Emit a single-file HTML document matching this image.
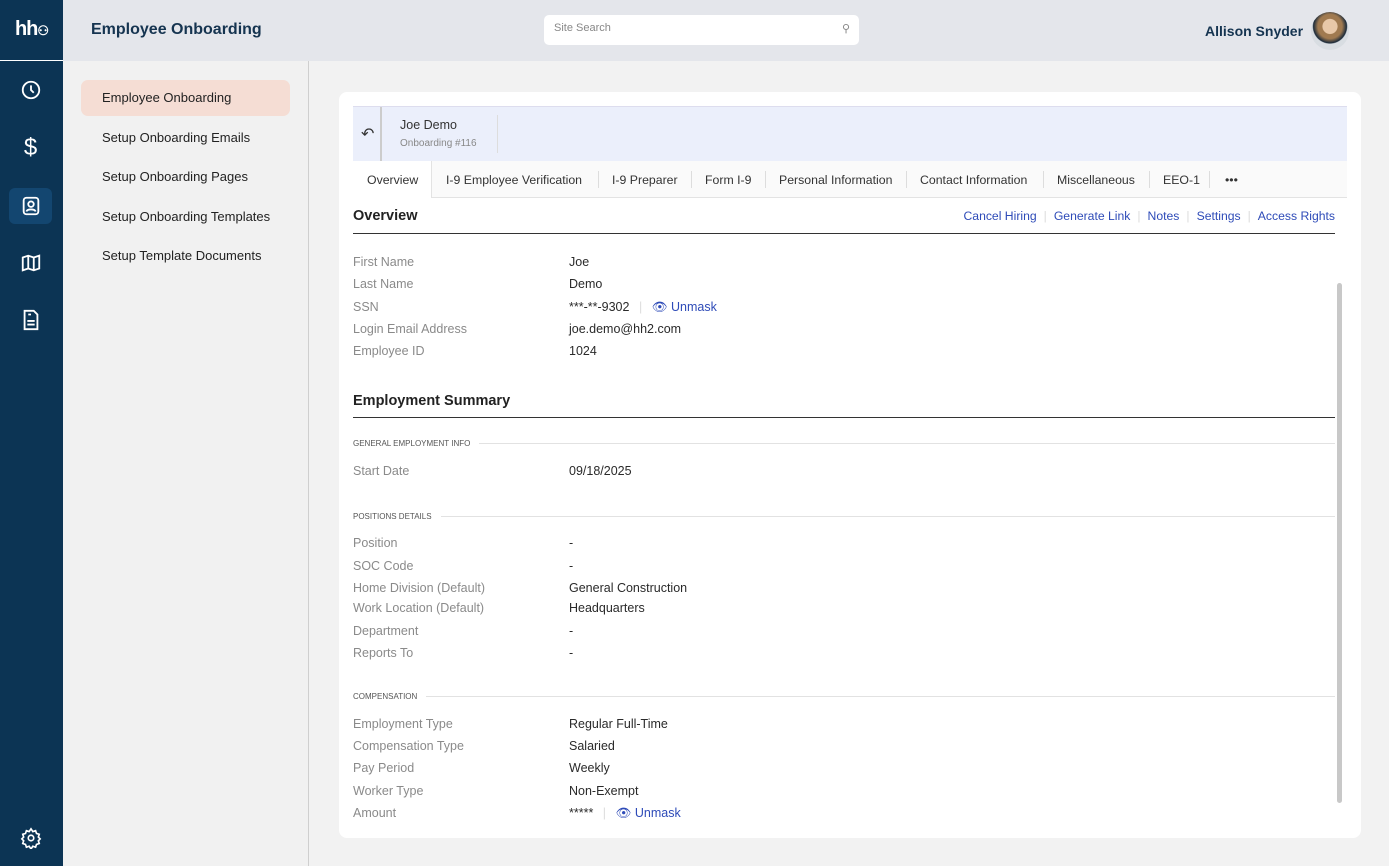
<!DOCTYPE html>
<html><head><style>
*{box-sizing:border-box;margin:0;padding:0}
body{width:1389px;height:866px;overflow:hidden;font-family:"Liberation Sans",sans-serif;background:#f2f2f2;position:relative;color:#333}
.side{position:absolute;left:0;top:0;width:63px;height:866px;background:#0c3454}
.logo{position:absolute;left:0;top:0;width:63px;height:61px;border-bottom:1px solid #fff;color:#fff;font-weight:bold;font-size:20px;text-align:center;line-height:58px;letter-spacing:-1px}
.ic{position:absolute;left:9px;width:43px;height:36px;border-radius:6px;display:flex;align-items:center;justify-content:center}
.top{position:absolute;left:63px;top:0;width:1326px;height:61px;background:#e4e6eb}
.title{position:absolute;left:28px;top:21px;font-size:16px;font-weight:bold;color:#153450}
.search{position:absolute;left:481px;top:15px;width:315px;height:30px;background:#fff;border-radius:5px;font-size:11px;color:#888;padding:7px 10px}
.user{position:absolute;left:1142px;top:23px;font-size:14px;font-weight:bold;color:#153450}
.av{position:absolute;left:1248px;top:12px;width:38px;height:38px;border-radius:50%;background:radial-gradient(circle at 50% 38%,#e8c8a8 0 24%,#a07a50 26% 40%,#1a2a3a 55%,#d8dde2 58%)}
.nav{position:absolute;left:63px;top:61px;width:246px;height:805px;background:#f1f1f1;border-right:1px solid #cfcfcf}
.nav div{position:absolute;left:39px;font-size:13px;color:#222}
.nav .act{left:18px;top:19px;width:209px;height:36px;background:#f5ddd4;border-radius:7px;padding:10px 21px}
.card{position:absolute;left:339px;top:92px;width:1022px;height:746px;background:#fff;border-radius:8px}
.strip{position:absolute;left:14px;top:14px;width:994px;height:55px;background:#ebeffb;border-top:1px solid #dde}
.tabs{position:absolute;left:14px;top:69px;width:994px;height:37px;background:#fafafa;border-bottom:1px solid #e3e3e3;font-size:12.3px;color:#333}
.tabs span{position:absolute;top:12px}
.tabs i{position:absolute;top:10px;width:1px;height:17px;background:#ddd}
.lbl{position:absolute;left:14px;font-size:12.5px;color:#8a8a8a}
.val{position:absolute;left:230px;font-size:12.5px;color:#2a2a2a}
.h{position:absolute;left:14px;font-size:14.5px;font-weight:bold;color:#222}
.hr{position:absolute;left:14px;width:982px;height:1px;background:#333}
.sec{position:absolute;left:14px;font-size:8px;color:#555;width:982px;display:flex;align-items:center}
.sec:after{content:"";flex:1;height:1px;background:#e2e2e2;margin-left:9px}
.lnk{color:#2e4bb8}
.links{position:absolute;right:26px;top:117px;font-size:12.2px;color:#2e4bb8}
.links b{font-weight:normal;color:#ddd;margin:0 7px}
</style></head><body>
<div class="side">
<div class="logo">hh<span style="font-size:13px">⚇</span></div>
<div class="ic" style="top:72px"><svg width="22" height="22" viewBox="0 0 24 24" fill="none" stroke="#fff" stroke-width="2"><circle cx="12" cy="12" r="9"/><path d="M12 7v5l3 3"/></svg></div>
<div class="ic" style="top:130px;color:#fff;font-size:24px">$</div>
<div class="ic" style="top:188px;background:#134670"><svg width="22" height="22" viewBox="0 0 24 24" fill="none" stroke="#fff" stroke-width="2"><rect x="4" y="3" width="16" height="18" rx="3"/><circle cx="12" cy="10" r="3"/><path d="M7 18c1-3 9-3 10 0"/></svg></div>
<div class="ic" style="top:245px"><svg width="22" height="22" viewBox="0 0 24 24" fill="none" stroke="#fff" stroke-width="2"><path d="M3 6l6-2 6 2 6-2v14l-6 2-6-2-6 2z M9 4v14 M15 6v14"/></svg></div>
<div class="ic" style="top:302px"><svg width="20" height="22" viewBox="0 0 20 24" fill="none" stroke="#fff" stroke-width="2"><path d="M3 2h10l4 4v16H3z M6 13h8 M6 17h8 M7 6h3"/></svg></div>
<div class="ic" style="top:820px"><svg width="22" height="22" viewBox="0 0 24 24" fill="none" stroke="#fff" stroke-width="1.8"><circle cx="12" cy="12" r="3"/><path d="M12 2l2 3 3-1 1 3 3 1-1 3 2 2-2 2 1 3-3 1-1 3-3-1-2 3-2-3-3 1-1-3-3-1 1-3-2-2 2-2-1-3 3-1 1-3 3 1z"/></svg></div>
</div>
<div class="top">
<div class="title">Employee Onboarding</div>
<div class="search">Site Search<span style="position:absolute;right:9px;top:7px">⚲</span></div>
<div class="user">Allison Snyder</div>
<div class="av"></div>
</div>
<div class="nav">
<div class="act">Employee Onboarding</div>
<div style="top:69px">Setup Onboarding Emails</div>
<div style="top:108px">Setup Onboarding Pages</div>
<div style="top:148px">Setup Onboarding Templates</div>
<div style="top:187px">Setup Template Documents</div>
</div>
<div class="card">
<div class="strip">
<div style="position:absolute;left:8px;top:17px;font-size:16px;color:#333">↶</div>
<div style="position:absolute;left:27px;top:0;width:2px;height:54px;background:#ccc"></div>
<div style="position:absolute;left:47px;top:11px;font-size:12.5px;color:#333">Joe Demo</div>
<div style="position:absolute;left:47px;top:31px;font-size:10px;color:#888">Onboarding #116</div>
<div style="position:absolute;left:144px;top:8px;width:1px;height:38px;background:#ddd"></div>
</div>
<div class="tabs">
<div style="position:absolute;left:0;top:0;width:79px;height:37px;background:#fff;border-right:1px solid #e3e3e3"></div>
<span style="left:14px">Overview</span>
<span style="left:93px">I-9 Employee Verification</span><i style="left:245px"></i>
<span style="left:259px">I-9 Preparer</span><i style="left:338px"></i>
<span style="left:352px">Form I-9</span><i style="left:412px"></i>
<span style="left:426px">Personal Information</span><i style="left:553px"></i>
<span style="left:567px">Contact Information</span><i style="left:690px"></i>
<span style="left:704px">Miscellaneous</span><i style="left:796px"></i>
<span style="left:810px">EEO-1</span><i style="left:856px"></i>
<span style="left:872px">•••</span>
</div>
<div class="h" style="top:116px">Overview</div>
<div class="links">Cancel Hiring<b>|</b>Generate Link<b>|</b>Notes<b>|</b>Settings<b>|</b>Access Rights</div>
<div class="hr" style="top:141px"></div>
<div class="lbl" style="top:163px">First Name</div><div class="val" style="top:163px">Joe</div>
<div class="lbl" style="top:185px">Last Name</div><div class="val" style="top:185px">Demo</div>
<div class="lbl" style="top:208px">SSN</div><div class="val" style="top:208px">***-**-9302 <span style="color:#ddd;margin:0 6px">|</span> <span class="lnk">👁&#xFE0E; Unmask</span></div>
<div class="lbl" style="top:230px">Login Email Address</div><div class="val" style="top:230px">joe.demo@hh2.com</div>
<div class="lbl" style="top:252px">Employee ID</div><div class="val" style="top:252px">1024</div>
<div class="h" style="top:301px">Employment Summary</div>
<div class="hr" style="top:325px"></div>
<div class="sec" style="top:347px">GENERAL EMPLOYMENT INFO</div>
<div class="lbl" style="top:372px">Start Date</div><div class="val" style="top:372px">09/18/2025</div>
<div class="sec" style="top:420px">POSITIONS DETAILS</div>
<div class="lbl" style="top:444px">Position</div><div class="val" style="top:444px">-</div>
<div class="lbl" style="top:467px">SOC Code</div><div class="val" style="top:467px">-</div>
<div class="lbl" style="top:489px">Home Division (Default)</div><div class="val" style="top:489px">General Construction</div>
<div class="lbl" style="top:509px">Work Location (Default)</div><div class="val" style="top:509px">Headquarters</div>
<div class="lbl" style="top:532px">Department</div><div class="val" style="top:532px">-</div>
<div class="lbl" style="top:554px">Reports To</div><div class="val" style="top:554px">-</div>
<div class="sec" style="top:600px">COMPENSATION</div>
<div class="lbl" style="top:625px">Employment Type</div><div class="val" style="top:625px">Regular Full-Time</div>
<div class="lbl" style="top:647px">Compensation Type</div><div class="val" style="top:647px">Salaried</div>
<div class="lbl" style="top:669px">Pay Period</div><div class="val" style="top:669px">Weekly</div>
<div class="lbl" style="top:692px">Worker Type</div><div class="val" style="top:692px">Non-Exempt</div>
<div class="lbl" style="top:714px">Amount</div><div class="val" style="top:714px">***** <span style="color:#ddd;margin:0 6px">|</span> <span class="lnk">👁&#xFE0E; Unmask</span></div>
<div style="position:absolute;left:998px;top:191px;width:5px;height:520px;background:#c8c8c8;border-radius:3px"></div>
</div>
</body></html>
